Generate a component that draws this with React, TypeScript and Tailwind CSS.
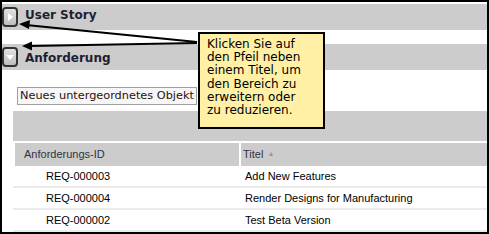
import React from 'react';

const Toggle: React.FC<{ open?: boolean }> = ({ open }) => (
  <div className="w-[16px] h-[20px] shrink-0 rounded-[4px] border-2 border-[#333] bg-gradient-to-b from-[#e2e2e2] to-[#bdbdbd] flex items-center justify-center">
    {open ? (
      <svg width="8" height="5" viewBox="0 0 8 5">
        <path d="M0 0 L8 0 L4 5 Z" fill="#fff" />
      </svg>
    ) : (
      <svg width="5" height="8" viewBox="0 0 5 8">
        <path d="M0 0 L5 4 L0 8 Z" fill="#fff" />
      </svg>
    )}
  </div>
);

const SectionHeader: React.FC<{ title: string; open?: boolean; textClass: string }> = ({
  title,
  open,
  textClass,
}) => (
  <div className="h-[26px] bg-[#cccccc] flex items-center">
    <Toggle open={open} />
    <span
      className={`ml-[7px] text-[12px] font-bold text-[#1e1e32] font-['DejaVu_Sans',sans-serif] ${textClass}`}
    >
      {title}
    </span>
  </div>
);

const rows = [
  { id: 'REQ-000003', title: 'Add New Features' },
  { id: 'REQ-000004', title: 'Render Designs for Manufacturing' },
  { id: 'REQ-000002', title: 'Test Beta Version' },
];

export default function App() {
  return (
    <div className="relative w-[489px] h-[234px] border-2 border-black bg-white overflow-hidden pt-[2px]">
      <SectionHeader title="User Story" textClass="mb-[5px]" />
      <div className="mt-[14px]">
        <SectionHeader title="Anforderung" open textClass="mt-[2px]" />
      </div>

      <div className="pl-[11px]">
        <div className="mt-[17px] ml-[4px] flex">
          <button className="h-[18px] px-[2px] border border-[#a0a0a0] bg-[#f6f6f6] text-[11.3px] leading-none text-[#2a1010] font-['DejaVu_Sans',sans-serif] whitespace-nowrap">
            Neues untergeordnetes Objekt
          </button>
        </div>

        <div className="mt-[6px] h-[30px] bg-[#cccccc]" />

        <div className="font-['Liberation_Sans',Arial,sans-serif] text-[11px]">
          <div className="mt-[2px] ml-[2px] h-[23px] flex gap-[2px] text-[#333340]">
            <div className="w-[224px] bg-[#cccccc] flex items-center pl-[9px]">Anforderungs-ID</div>
            <div className="flex-1 bg-[#cccccc] flex items-center pl-[2px]">
              Titel
              <span className="ml-[4px] text-[7px] text-[#999]">▲</span>
            </div>
          </div>
          {rows.map((r) => (
            <div key={r.id} className="h-[22px] flex items-center border-b-2 border-[#ebebeb] text-black">
              <div className="w-[230px] pl-[33px]">{r.id}</div>
              <div className="pl-[2px]">{r.title}</div>
            </div>
          ))}
        </div>
      </div>

      <div className="absolute left-[196px] top-[30px] w-[127px] h-[97px] border-2 border-black bg-[#fff0a6] pl-[7px] pt-[4px] text-[12px] leading-[13.2px] text-black whitespace-nowrap font-['DejaVu_Sans',sans-serif]">
        Klicken Sie auf
        <br />
        den Pfeil neben
        <br />
        einem Titel, um
        <br />
        den Bereich zu
        <br />
        erweitern oder
        <br />
        zu reduzieren.
      </div>

      <svg className="absolute left-[-2px] top-[-2px] pointer-events-none" width="489" height="234" viewBox="0 0 489 234">
        <line x1="197" y1="42" x2="26" y2="25" stroke="#000" strokeWidth="2" />
        <path d="M19 24 L30 20 L29 29 Z" fill="#000" />
        <line x1="197" y1="43" x2="30" y2="46" stroke="#000" strokeWidth="2" />
        <path d="M22 46 L32 41.5 L32 50.5 Z" fill="#000" />
      </svg>
    </div>
  );
}
